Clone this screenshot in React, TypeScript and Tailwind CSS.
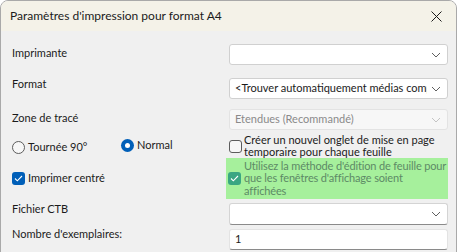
import React from "react";

function Chevron({ light }: { light?: boolean }) {
  return (
    <svg width="10" height="6" viewBox="0 0 10 6" className="shrink-0">
      <path d="M1 1 L5 5 L9 1" fill="none" stroke={light ? "#c4c4c4" : "#606060"} strokeWidth="1" />
    </svg>
  );
}

function Select({ value, disabled }: { value?: string; disabled?: boolean }) {
  return (
    <div
      className={
        "h-[21px] flex items-center justify-between pl-[5px] pr-[6px] gap-[4px] rounded-[3px] border " +
        (disabled
          ? "bg-[#f7f7f7] border-[#e3e3e3] text-[#8a8a8a]"
          : "bg-white border-[#d0d0d0] text-[#1b1b1b]")
      }
    >
      <span className="whitespace-nowrap overflow-hidden">{value}</span>
      <Chevron light={disabled} />
    </div>
  );
}

function Check({ disabled }: { disabled?: boolean }) {
  return (
    <div
      className={
        "w-[13px] h-[13px] rounded-[3px] flex items-center justify-center shrink-0 " +
        (disabled ? "bg-[#3aa682]" : "bg-[#005fb8]")
      }
    >
      <svg width="9" height="7" viewBox="0 0 9 7">
        <path d="M1 3.5 L3.3 5.8 L8 1" fill="none" stroke="white" strokeWidth="1.1" />
      </svg>
    </div>
  );
}

export default function App() {
  return (
    <div
      className="w-[462px] h-[252px] bg-white overflow-hidden text-[11px] text-[#1b1b1b]"
      style={{ fontFamily: 'Lato, "Noto Sans", sans-serif' }}
    >
      <div className="w-[457px] h-[270px] rounded-t-[8px] border border-[#a9a9a9] bg-[#f0f0f0] overflow-hidden">
        {/* Title bar */}
        <div className="h-[30px] bg-[#f4f2e8] flex items-center justify-between pl-[9px] pr-[14px]">
          <span className="text-[12px]">Paramètres d'impression pour format A4</span>
          <svg width="11" height="11" viewBox="0 0 11 11">
            <path d="M0.5 0.5 L10.5 10.5 M10.5 0.5 L0.5 10.5" stroke="#1b1b1b" strokeWidth="1" />
          </svg>
        </div>

        {/* Body */}
        <div className="pl-[11px] pr-[8px] flex flex-col">
          <div className="mt-[13px] grid grid-cols-[217px_219px] items-center">
            <span className="-mt-[3px]">Imprimante</span>
            <Select />
          </div>
          <div className="mt-[13px] grid grid-cols-[217px_219px] items-center">
            <span className="-mt-[8px]">Format</span>
            <Select value="<Trouver automatiquement médias comp" />
          </div>
          <div className="mt-[10px] grid grid-cols-[217px_219px] items-center">
            <span className="-mt-[3px]">Zone de tracé</span>
            <Select value="Etendues (Recommandé)" disabled />
          </div>

          {/* Radios + checkbox */}
          <div className="mt-[2px] grid grid-cols-[217px_219px] h-[26px]">
            <div className="flex items-start">
              <div className="w-[109px] flex items-center gap-[3px] mt-[7px]">
                <div className="w-[13px] h-[13px] rounded-full border border-[#5c5c5c] bg-[#f7f7f7]" />
                <span>Tournée 90°</span>
              </div>
              <div className="flex items-center gap-[3px] mt-[5px]">
                <div className="w-[13px] h-[13px] rounded-full bg-[#005fb8] flex items-center justify-center">
                  <div className="w-[5px] h-[5px] rounded-full bg-white" />
                </div>
                <span>Normal</span>
              </div>
            </div>
            <div className="flex items-start gap-[2px] leading-[12px]">
              <div className="w-[13px] h-[13px] rounded-[3px] border border-[#5c5c5c] bg-[#f7f7f7] shrink-0 mt-[8px]" />
              <span className="mt-[2px] whitespace-nowrap">
                Créer un nouvel onglet de mise en page
                <br />
                temporaire pour chaque feuille
              </span>
            </div>
          </div>

          {/* Imprimer centré + green option */}
          <div className="grid grid-cols-[214px_222px] h-[41px]">
            <div className="flex items-center gap-[3px]">
              <Check />
              <span>Imprimer centré</span>
            </div>
            <div className="bg-[#a6f09c] flex items-center gap-[3px] pl-[2px] leading-[12.5px] text-[#5d8a66] overflow-hidden">
              <Check disabled />
              <span className="whitespace-nowrap tracking-[-0.15px]">
                Utilisez la méthode d'édition de feuille pour
                <br />
                que les fenêtres d'affichage soient
                <br />
                affichées
              </span>
            </div>
          </div>

          <div className="mt-[4px] grid grid-cols-[217px_219px] items-center">
            <span className="-mt-[10px]">Fichier CTB</span>
            <div className="h-[22px]">
              <div className="h-full flex items-center justify-end pr-[6px] rounded-[3px] border border-[#d4d4d4] border-b-[#8a8a8a] bg-white">
                <Chevron />
              </div>
            </div>
          </div>
          <div className="mt-[4px] grid grid-cols-[217px_219px] items-center">
            <span className="-mt-[10px]">Nombre d'exemplaires:</span>
            <div className="h-[21px] flex items-center pl-[5px] rounded-[3px] border border-[#e3e3e3] border-b-[#8a8a8a] bg-white">
              1
            </div>
          </div>
        </div>
      </div>
    </div>
  );
}
